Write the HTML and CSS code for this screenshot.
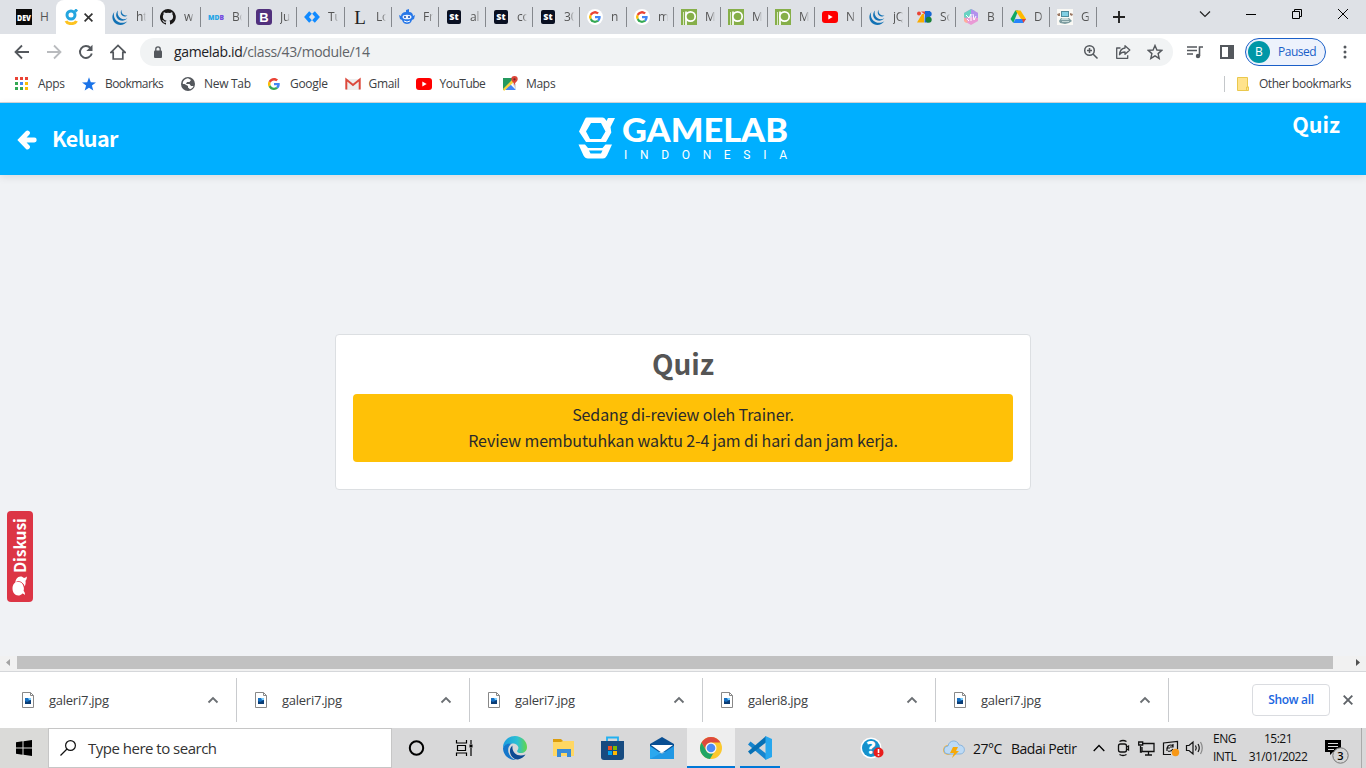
FILE: index.html
```html
<!DOCTYPE html>
<html lang="id">
<head>
<meta charset="utf-8">
<title>Gamelab Quiz</title>
<link rel="stylesheet" href="styles.css">
</head>
<body>
<svg class="defs" aria-hidden="true">
  <symbol id="google" viewBox="0 0 48 48"><path fill="#ea4335" d="M24 9.500c3.500 0 6.700 1.200 9.200 3.600l6.900-6.900C35.900 2.400 30.500 0 24 0 14.600 0 6.500 5.400 2.600 13.200l8 6.200C12.400 13.700 17.700 9.500 24 9.500z"/><path fill="#4285f4" d="M47 24.500c0-1.600-.2-3.100-.4-4.500H24v9h12.900c-.6 3-2.300 5.500-4.800 7.200l7.700 6C44.400 38 47 31.800 47 24.500z"/><path fill="#fbbc05" d="M10.500 28.600a14.500 14.500 0 0 1 0-9.200l-8-6.200a24 24 0 0 0 0 21.600z"/><path fill="#34a853" d="M24 48c6.500 0 11.900-2.100 15.900-5.800l-7.700-6c-2.200 1.500-4.900 2.300-8.200 2.300-6.300 0-11.600-4.200-13.500-9.900l-8 6.200C6.500 42.600 14.600 48 24 48z"/></symbol>
  <symbol id="youtube" viewBox="0 0 16 16"><rect y="2" width="16" height="12" rx="3" fill="#f00"/><path fill="#fff" d="M6.300 5.500v5L10.700 8z"/></symbol>
  <symbol id="jquery" viewBox="0 0 16 16"><g fill="#1272b5"><path d="M2.300 3C-1 7 0 13 5 15.200c3.700 1.600 8 .4 10.300-3-2.700 1.800-6 2.200-8.800.8C2.600 11 1 7 2.300 3z"/><path d="M6 1.500C3 4.700 3.800 9 7.300 11c2.700 1.500 6 .8 8-1.700-2.200 1.100-4.700 1.200-6.600 0C6 7.500 5 4.500 6 1.500z"/><path d="M9.700.800c-1.600 2-1.200 4.600.8 6 1.600 1.100 3.700.8 5-.6-1.400.4-2.800.4-3.900-.4C9.800 4.600 9.200 2.700 9.700.800z"/></g></symbol>
  <symbol id="st" viewBox="0 0 16 16"><rect x="1" y="1" width="14" height="14" rx="2" fill="#0a1022"/><text x="8" y="11.300" text-anchor="middle" font-family="Open Sans, sans-serif" font-size="9" font-weight="800" fill="#fff">St</text></symbol>
  <symbol id="pgreen" viewBox="0 0 16 16"><path fill="#86af49" d="M0 0h16v16H0z"/><path fill="none" stroke="#fff" stroke-width="1.700" d="M5 16V2.500"/><circle cx="9.500" cy="7.500" r="4.700" fill="#86af49" stroke="#fff" stroke-width="1.700"/><path stroke="#d8e8c2" d="M2.500 3v13"/></symbol>
  <symbol id="glogo" viewBox="0 0 38 42"><path fill="currentColor" fill-rule="evenodd" d="M8.500.500h16q2 0 3 2l1 1.500 1.500-3H37l-4.500 9 .8 5.500L28 25H8L1 14.500 7 2q.5-1.500 1.500-1.500zM13 6L8 14.500l4 7.500h11l4.500-7.500L23 6zM.5 27.500H7l3 3.500h14.500l3-3.500H34l-5 11q-1.500 3-4 3H10q-3 0-4.500-3zM11 33.500l1.500 3H23l1.500-3z"/></symbol>
  <symbol id="chrome" viewBox="0 0 24 24"><circle cx="12" cy="12" r="11" fill="#fbc82d"/><path fill="#de493d" d="M2.500 6.500a11 11 0 0 1 19 0H12a5.500 5.500 0 0 0-5 8z"/><path fill="#20a565" d="M2.500 6.500L7.200 14.700A5.500 5.500 0 0 0 14.500 17L11 23A11 11 0 0 1 2.500 6.500z"/><circle cx="12" cy="12" r="5.500" fill="#f4f6fa"/><circle cx="12" cy="12" r="4.300" fill="#4c8bf5"/></symbol>
  <symbol id="imgfile" viewBox="0 0 14 18"><path fill="#fff" stroke="#888" d="M1.500 1.500h8l3 3v12h-11z"/><path fill="none" stroke="#888" d="M9.500 1.500v3h3"/><path fill="#176fc1" d="M4 7h6v6H4z"/><path fill="#0b3d75" d="M4 10l2 1 4-2v4H4z"/><path fill="#7ed0ff" d="M7 7h3v2H8z"/></symbol>
  <symbol id="up" viewBox="0 0 12 8"><path d="M1.500 6.500L6 2l4.500 4.500" fill="none" stroke="currentColor" stroke-width="1.800"/></symbol>
</svg>

<div class="tabs">
  <div class="tab first"><svg viewBox="0 0 16 16"><path fill="#0a0a0a" d="M0 0h16v16H0z"/><text x="8" y="11.500" textLength="14" lengthAdjust="spacingAndGlyphs" text-anchor="middle" font-family="Open Sans, sans-serif" font-size="9.500" font-weight="800" fill="#fff">DEV</text></svg><span>H</span></div>
  <div class="tab active"><svg viewBox="0 0 16 16"><g fill="none"><circle cx="7" cy="6" r="4" stroke="#24a5df" stroke-width="3"/><path d="M11 2.500l2-2" stroke="#24a5df" stroke-width="3"/><path d="M2 12c1.500 3.500 9 3.500 10.500 0" stroke="#fdc321" stroke-width="3"/></g></svg><svg class="close" viewBox="0 0 8 8"><path d="M.5.500l7 7m0-7l-7 7" stroke="#333" stroke-width="1.500"/></svg></div>
  <div class="tab w"><svg><use href="#jquery"/></svg><span>ht</span></div>
  <div class="tab w"><svg viewBox="0 0 16 16"><path fill="#191717" d="M8 0a8 8 0 0 0-2.500 15.600c.4.100.5-.2.500-.4v-1.500c-2.200.5-2.700-1-2.700-1-.4-.9-.9-1.200-.9-1.200-.7-.5.100-.5.100-.5.800.1 1.200.8 1.200.8.700 1.200 1.900.9 2.300.7.100-.5.300-.9.500-1.100-1.800-.2-3.600-.9-3.600-4 0-.9.300-1.600.8-2.100-.1-.2-.4-1 .1-2.100 0 0 .7-.2 2.200.8a7.500 7.500 0 0 1 4 0c1.500-1 2.200-.8 2.200-.8.400 1.100.2 1.900.1 2.100.5.600.8 1.300.8 2.100 0 3.100-1.900 3.800-3.700 4 .3.300.6.800.6 1.500v2.200c0 .2.100.5.600.4A8 8 0 0 0 8 0z"/></svg><span>w</span></div>
  <div class="tab w"><svg viewBox="0 0 16 16"><text x="0" y="11" textLength="16" lengthAdjust="spacingAndGlyphs" font-family="Open Sans, sans-serif" font-size="7.500" font-weight="800" fill="#25a5e5">MD<tspan fill="#744be0">B</tspan></text></svg><span>Bo</span></div>
  <div class="tab w"><svg viewBox="0 0 16 16"><rect width="16" height="16" rx="3" fill="#51307d"/><text x="8" y="12.500" text-anchor="middle" font-family="Liberation Sans, sans-serif" font-size="13" font-weight="700" fill="#fff">B</text></svg><span>Ju</span></div>
  <div class="tab w"><svg viewBox="0 0 16 16"><path d="M6.500 3.500L2.500 8l4 4.500m3-9l4 4.500-4 4.500" fill="none" stroke="#118aff" stroke-width="3.600"/></svg><span>Tu</span></div>
  <div class="tab"><svg viewBox="0 0 16 16"><text x="8" y="14.500" text-anchor="middle" font-family="Liberation Serif, serif" font-size="19" fill="#222">L</text></svg><span>Lo</span></div>
  <div class="tab"><svg viewBox="0 0 16 16"><path fill="#2878e8" d="M7 1l3-1v3c3 0 4 2 4 4l2-1-1 4-2 1c-1 3-3 4-5 4s-4-1-5-4L1 10 0 6l2 1c0-2 2-4 5-4z"/><ellipse cx="8" cy="8" rx="4.500" ry="2.300" fill="#edf4ff"/><circle cx="6" cy="8" r="1" fill="#154bad"/><circle cx="10" cy="8" r="1" fill="#154bad"/><path d="M5 12q3 2 6 0" fill="none" stroke="#fff"/></svg><span>Fr</span></div>
  <div class="tab"><svg><use href="#st"/></svg><span>al</span></div>
  <div class="tab"><svg><use href="#st"/></svg><span>co</span></div>
  <div class="tab"><svg><use href="#st"/></svg><span>30</span></div>
  <div class="tab"><svg class="round"><use href="#google"/></svg><span>n</span></div>
  <div class="tab"><svg class="round"><use href="#google"/></svg><span>m</span></div>
  <div class="tab"><svg><use href="#pgreen"/></svg><span>M</span></div>
  <div class="tab"><svg><use href="#pgreen"/></svg><span>M</span></div>
  <div class="tab"><svg><use href="#pgreen"/></svg><span>M</span></div>
  <div class="tab"><svg><use href="#youtube"/></svg><span>N</span></div>
  <div class="tab"><svg><use href="#jquery"/></svg><span>jQ</span></div>
  <div class="tab"><svg viewBox="0 0 16 16"><circle cx="3" cy="4.500" r="2" fill="#ea4335"/><path fill="#f9ab00" d="M6 5h2v8.500H1z"/><path fill="#ea4335" d="M5 2.500h4v3z"/><path fill="#1967d2" d="M9 2h5v5l-2 6.500H8.500z"/><circle cx="13" cy="5" r="2.700" fill="#1967d2"/><circle cx="12.700" cy="10.700" r="3" fill="#188038"/></svg><span>So</span></div>
  <div class="tab"><svg viewBox="0 0 16 16"><path fill="#e99ad5" d="M8 0l7 4v8l-7 4-7-4V4z"/><path fill="#69d3c2" d="M8 0l4 2-4 6-7 1V4z"/><path fill="#b291ed" d="M8 0l7 4v5L8 8z"/><path fill="#ffad99" d="M1 8l4 5-2 1-2-2z"/><path d="M3 6l3 3 2-4v7m-4-2l2 2m4-7l1 6 2-4" stroke="#fff" fill="none"/></svg><span>B</span></div>
  <div class="tab"><svg viewBox="0 0 16 16"><path fill="#11a861" d="M5.300 1.500h3L3.300 14 .5 10z"/><path fill="#ffba00" d="M5.500 1.500h5L16 10h-5z"/><path fill="#2684fc" d="M3.300 14L5.500 10H16l-2.700 4z"/><path fill="#ea4335" d="M12 10h4l-2.700 4z"/></svg><span>D</span></div>
  <div class="tab"><svg viewBox="0 0 16 16"><path fill="#faf9f5" d="M0 0h16v16H0z"/><path fill="#4f8c9c" d="M4 2h8v6H4z"/><path fill="#81d0e4" d="M5 3h6v4H5z"/><path fill="#9b7864" d="M0 5l3-1v3H1zm13-1l3 1-1 2-2-1z"/><path fill="#7d9ca0" d="M4 9h8l3 3-3 2-4 1-5-1-1-2z"/><path fill="#c5d8d7" d="M5 9h6l1 2H4zm0 3h7v1H5z"/></svg><span>G</span></div>
  <svg class="plus" viewBox="0 0 12 12"><path d="M6 0v12M0 6h12" stroke="#222" stroke-width="1.900"/></svg>
  <div class="winbtns">
    <svg viewBox="0 0 12 12"><path d="M1 3.500l5 5 5-5" fill="none" stroke="#222" stroke-width="1.200"/></svg>
    <svg viewBox="0 0 12 12"><path d="M1 6.500h10" stroke="#000"/></svg>
    <svg viewBox="0 0 12 12"><path d="M1.500 3.500h7v7h-7zM3.500 3V1.500h7v7H9" fill="none" stroke="#000"/></svg>
    <svg viewBox="0 0 12 12"><path d="M1 1l10 10m0-10L1 11" stroke="#000"/></svg>
  </div>
</div>

<div class="toolbar">
  <div class="nav">
    <svg viewBox="0 0 16 16"><path d="M15 8H2m6-6.500L1.500 8 8 14.500" fill="none" stroke="#54585d" stroke-width="1.800"/></svg>
    <svg viewBox="0 0 16 16"><path d="M1 8h13M8 1.500L14.500 8 8 14.500" fill="none" stroke="#b9bbbe" stroke-width="1.800"/></svg>
    <svg viewBox="0 0 16 16"><path d="M13.800 9.500A6 6 0 1 1 12.500 4" fill="none" stroke="#54585d" stroke-width="1.900"/><path fill="#54585d" d="M14.500.800v6.200H8.300z"/></svg>
    <svg viewBox="0 0 16 16"><path d="M1 8.300L8 1.500l7 6.800h-2.200V15H3.200V8.300z" fill="none" stroke="#54585d" stroke-width="1.700"/></svg>
  </div>
  <div class="omni">
    <svg class="lock" viewBox="0 0 10 12"><rect x="1" y="4.500" width="8" height="7.500" rx="1" fill="#54585d"/><path d="M2.800 5V3a2.200 2.200 0 0 1 4.400 0v2" fill="none" stroke="#54585d" stroke-width="1.300"/></svg>
    <span class="url"><b>gamelab.id</b>/class/43/module/14</span>
    <svg viewBox="0 0 16 16"><g fill="none" stroke="#54585d" stroke-width="1.500"><circle cx="6.500" cy="6.500" r="4.800"/><path d="M10 10l4.500 4.500M4 6.500h5M6.500 4v5"/></g></svg>
    <svg viewBox="0 0 16 16"><g fill="none" stroke="#54585d" stroke-width="1.300" stroke-linejoin="round"><path d="M5.500 4H1.700v10.300h11v-3"/><path d="M10 1.700L14.800 6 10 10.300V8c-2.500 0-4.300.7-5.500 2.800C4.800 7 6.500 4.300 10 4z"/></g></svg>
    <svg viewBox="0 0 16 16"><path d="M8 1.500l1.900 4.500 4.900.4-3.700 3.200 1.100 4.800L8 11.800l-4.200 2.600 1.100-4.800-3.700-3.200 4.900-.4z" fill="none" stroke="#54585d" stroke-width="1.400"/></svg>
  </div>
  <svg class="media" viewBox="0 0 16 16"><path d="M0 3h10M0 6.500h10M0 10h6M12.500 12V3H16" fill="none" stroke="#54585d" stroke-width="1.600"/><circle cx="11" cy="12" r="2.200" fill="#54585d"/></svg>
  <svg class="panel" viewBox="0 0 14 14"><path fill="#54585d" fill-rule="evenodd" d="M0 0h14v14H0zM2 2v10h6V2z"/></svg>
  <div class="profile"><i>B</i><span>Paused</span></div>
  <svg class="dots" viewBox="0 0 4 14"><g fill="#54585d"><circle cx="2" cy="2" r="1.500"/><circle cx="2" cy="7" r="1.500"/><circle cx="2" cy="12" r="1.500"/></g></svg>
</div>

<div class="bookmarks">
  <div class="bm apps"><svg viewBox="0 0 16 16"><path fill="#ea4335" d="M1 1h3v3H1zm5 0h3v3H6zm5 0h3v3h-3z"/><path fill="#34a853" d="M1 6h3v3H1zm0 5h3v3H1zm5 0h3v3H6z"/><path fill="#4285f4" d="M6 6h3v3H6z"/><path fill="#fbbc05" d="M11 6h3v3h-3zm0 5h3v3h-3z"/></svg><span>Apps</span></div>
  <div class="bm books"><svg viewBox="0 0 16 16"><path fill="#1a73e8" d="M8 1.300l1.800 4.900 5.200.2-4.100 3.200 1.400 5L8 11.700l-4.300 2.900 1.400-5L1 6.400l5.200-.2z"/></svg><span>Bookmarks</span></div>
  <div class="bm newtab"><svg viewBox="0 0 16 16"><circle cx="8" cy="8" r="7" fill="#54585d"/><path fill="#fff" d="M8 2.300L11 4 9.500 6H7L6 8h3.500l1.500 2h2.500c-.6 1.700-1.800 2.800-3.500 3.300L8 11.500V10L4.500 8H2.800C2.600 5 4.800 2.700 8 2.300z"/></svg><span>New Tab</span></div>
  <div class="bm goo"><svg class="small"><use href="#google"/></svg><span>Google</span></div>
  <div class="bm mail"><svg viewBox="0 0 16 16"><path fill="#eee" d="M1 3h14v11H1z"/><path d="M1.300 13.500V3.500L8 9l6.700-5.500v10" fill="none" stroke="#dc493c" stroke-width="2"/></svg><span>Gmail</span></div>
  <div class="bm you"><svg><use href="#youtube"/></svg><span>YouTube</span></div>
  <div class="bm maps"><svg viewBox="0 0 16 16"><path fill="#24995e" d="M1 2h11L2 14H1z"/><path fill="#4285f4" d="M3 14l5-6 6 6z"/><path fill="#fbd33c" d="M10 4l2 2-10 9-1-2z"/><path fill="#d7dadd" d="M10 7l4 1v6z"/><path fill="#db4437" d="M12.500 0a3.200 3.200 0 0 0-3.200 3.300c0 2.500 3.200 2.700 3.200 7.200 0-4.500 3.200-4.700 3.200-7.200A3.200 3.200 0 0 0 12.500 0z"/><circle cx="12.500" cy="3.300" r="1.100" fill="#752821"/></svg><span>Maps</span></div>
  <div class="other"><svg viewBox="0 0 12 14"><path fill="#ffe38c" stroke="#eac84d" d="M.5.500h10V10h1v3.500H.5z"/><path d="M9.500 13v-3h2" fill="none" stroke="#eac84d"/></svg><span>Other bookmarks</span></div>
</div>

<header class="head">
  <div class="exit"><svg viewBox="0 0 20 20"><path d="M17.300 10H5m5.500-7L3.700 10l6.800 7" fill="none" stroke="#fff" stroke-width="4.800" stroke-linecap="round"/></svg><span>Keluar</span></div>
  <div class="brand"><svg class="mark"><use href="#glogo"/></svg><div class="words"><svg viewBox="0 0 166 46"><text class="gl" x="0" y="24.500" textLength="166" lengthAdjust="spacingAndGlyphs">GAMELAB</text><text class="ind" x="2" y="42.400" textLength="163">INDONESIA</text></svg></div></div>
  <div class="where">Quiz</div>
</header>

<main class="page">
  <section class="card">
    <h1>Quiz</h1>
    <p class="notice"><span>Sedang di-review oleh Trainer.</span><span>Review membutuhkan waktu 2-4 jam di hari dan jam kerja.</span></p>
  </section>
  <div class="chat"><svg viewBox="0 0 20 16"><path fill="#fff" d="M13 3.500c3.500-.3 6.500 2 6.500 5 0 1.500-.6 2.600-1.600 3.500.2 1 .8 2 1.700 2.800-1.800.2-3.300-.4-4.300-1.300-2 .4-4.300.1-5.800-1 4-1 5.500-5 3.500-9z"/><path fill="#fff" d="M7.500.500c4 0 7 2.500 7 5.700s-3 5.700-7 5.700c-.8 0-1.500-.1-2.200-.3-1.100.9-2.500 1.500-4.200 1.400.8-.8 1.300-1.700 1.500-2.700C1.300 9.200.5 7.800.5 6.200.5 3 3.500.5 7.500.5z"/><path d="M14.300 4.500c1 3.500-1 6.700-4.800 7.600" fill="none" stroke="#dc3545" stroke-width=".8"/></svg><span>Diskusi</span></div>
</main>
<div class="scroll"><svg viewBox="0 0 17 15"><path fill="#a3a3a3" d="M10 3v7L6 6.500z"/></svg><div class="thumb"></div><svg class="r" viewBox="0 0 17 15"><path fill="#505050" d="M7 3v7l4-3.500z"/></svg></div>

<div class="downloads">
  <div class="dl"><svg class="f"><use href="#imgfile"/></svg><span>galeri7.jpg</span><svg class="u"><use href="#up"/></svg></div>
  <div class="dl"><svg class="f"><use href="#imgfile"/></svg><span>galeri7.jpg</span><svg class="u"><use href="#up"/></svg></div>
  <div class="dl"><svg class="f"><use href="#imgfile"/></svg><span>galeri7.jpg</span><svg class="u"><use href="#up"/></svg></div>
  <div class="dl"><svg class="f"><use href="#imgfile"/></svg><span>galeri8.jpg</span><svg class="u"><use href="#up"/></svg></div>
  <div class="dl"><svg class="f"><use href="#imgfile"/></svg><span>galeri7.jpg</span><svg class="u"><use href="#up"/></svg></div>
  <div class="showall">Show all</div>
  <svg class="x" viewBox="0 0 10 10"><path d="M.7.700l8.600 8.600m0-8.600L.7 9.300" stroke="#5f6368" stroke-width="1.900"/></svg>
</div>

<footer class="taskbar">
  <div class="start"><svg viewBox="0 0 16 16"><path d="M0 2.200L6.500 1.300v6.200H0zM7.500 1.200L16 0v7.500H7.500zM0 8.500h6.500v6.200L0 13.800zM7.500 8.500H16V16l-8.500-1.200z"/></svg></div>
  <div class="search"><svg viewBox="0 0 16 16"><circle cx="10.500" cy="5.500" r="4.900" fill="none" stroke="#111" stroke-width="1.200"/><path d="M7 9L.5 15.500" stroke="#111" stroke-width="1.300"/></svg><span>Type here to search</span></div>
  <div class="app"><svg viewBox="0 0 24 24"><circle cx="11.500" cy="12" r="6.700" fill="none" stroke="#000" stroke-width="2"/></svg></div>
  <div class="app"><svg viewBox="0 0 24 24"><path d="M2.500 4v3h10V4M2.500 20v-3h10v3M3.500 9.500h8v5h-8zM17 4v4M17 12v8" fill="none" stroke="#000" stroke-width="1.200"/><path d="M15.500 8.500h3v3h-3z"/></svg></div>
  <div class="app"><svg viewBox="0 0 24 24"><defs><linearGradient id="e" x2="1"><stop stop-color="#199ce0"/><stop offset=".6" stop-color="#2dc0d2"/><stop offset="1" stop-color="#63d747"/></linearGradient></defs><path fill="url(#e)" d="M0 12C0 5 5.500 0 12 0s12 5 12 11c0 4-3 6-6 6-3.500 0-4.500-1.500-3.500-2.800C17 11 14 7.500 9.500 7.500 5 7.500 1 9 0 12z"/><path fill="#1577cb" d="M0 12c1-3.500 5-5 9-4.500-3 1.500-4.500 5-3.500 9C6.500 20 9.500 23 13 24 6 24.500 0 19 0 12z"/><path fill="#0c4a93" d="M9.500 9.500C4 14 8 24 15 23.500c3-.5 6-2.500 7.500-5-7 3-14-1-13-9z"/></svg></div>
  <div class="app"><svg viewBox="0 0 24 24"><path fill="#dc9d0c" d="M1 3h8l2 2v4H1z"/><path fill="#ffd763" d="M1 6h8l2-1h11v15H1z"/><path fill="#398bd7" d="M5 13h14v8h-4v-4H9v4H5z"/></svg></div>
  <div class="app"><svg viewBox="0 0 24 24"><path d="M6 6V1.500h11V6" fill="none" stroke="#23b1f1" stroke-width="1.800"/><path fill="#174b80" d="M0 5h23v16q0 3-3 3H3q-3 0-3-3z"/><path fill="#f25022" d="M7 10h4v4H7z"/><path fill="#7fba00" d="M12 10h4v4h-4z"/><path fill="#00a4ef" d="M7 15h4v4H7z"/><path fill="#ffb900" d="M12 15h4v4h-4z"/></svg></div>
  <div class="app"><svg viewBox="0 0 24 24"><path fill="#094f93" d="M0 8l12-7 12 7v8H0z"/><path fill="#fff" d="M1 9h22l-11 8z"/><path fill="#2ba8ef" d="M0 10l12 8L24 10v13H0z"/><path fill="#1785d6" d="M24 10L0 23h24z" opacity=".45"/></svg></div>
  <div class="app on"><svg><use href="#chrome"/></svg></div>
  <div class="app run"><svg viewBox="0 0 24 24"><path fill="#1685ce" d="M2.500 5.500L18 17.500V24L0 8.500z"/><path fill="#0870b4" d="M0 15.500L18 0v6.500L2.500 18.500z"/><path fill="#27a7ee" d="M17.500 0L24 3v18l-6.500 3z"/></svg></div>
  <div class="help"><svg viewBox="0 0 24 24"><circle cx="11" cy="11" r="10.500" fill="#fff"/><circle cx="11" cy="11" r="9" fill="#1492cd"/><text x="11" y="17" text-anchor="middle" font-family="Open Sans, sans-serif" font-size="17" font-weight="800" fill="#fff">?</text><circle cx="18.500" cy="15.500" r="5" fill="#e81c1c"/><path d="M18.500 12v4m0 1.200v1.500" stroke="#fff" stroke-width="1.600"/></svg></div>
  <div class="weather"><svg viewBox="0 0 24 20"><circle cx="6" cy="11" r="5" fill="#f8b840"/><path fill="#bddaf5" stroke="#75a9db" stroke-width=".8" d="M6 15a4 4 0 0 1 0-8c1-6 9-7 11-1 7 0 7 9 1 9z"/><path fill="#f6a90a" d="M11 8h5l-2 4h3l-7 7 2-5H8z"/></svg><span class="deg">27°C</span><span class="cond">Badai Petir</span></div>
  <div class="tray">
    <svg class="tup" viewBox="0 0 12 8"><path d="M.7 7L6 1.500 11.300 7" fill="none" stroke="#000" stroke-width="1.300"/></svg>
    <svg viewBox="0 0 18 18"><g fill="none" stroke="#111" stroke-width="1.300"><rect x="3.500" y="5" width="8" height="8" rx="2"/><path d="M11.500 8l2-1v4l-2-1M4.500 2.500q3.500-2 7 0M4.500 15.500q3.500 2 7 0"/></g></svg>
    <svg viewBox="0 0 18 18"><g fill="none" stroke="#111" stroke-width="1.300"><path d="M4 4.500h12v8H4V8M7 16h7M10.500 12.500V16M2.500 7v6H4M.7 3h4v3h-4z"/></g></svg>
    <svg viewBox="0 0 18 18"><path d="M9 15.500H1.500V4l14-1.500v8M5 10l1-3q3-2 5 0m0-2v3H8m-3 4V9h3m-2 3q3 1 5-2" fill="none" stroke="#111" stroke-width="1.200"/><circle cx="13.500" cy="13.500" r="3.700" fill="#f79817"/></svg>
    <svg viewBox="0 0 18 18"><g fill="none" stroke="#111" stroke-width="1.200"><path d="M1.500 6.500H4L8 3v12l-4-3.500H1.500zM10.500 6.500q1.500 2.500 0 5M13 5q2.500 4 0 8"/><path stroke="#888" d="M15.500 3q3.500 6 0 12"/></g></svg>
  </div>
  <div class="two lang"><span>ENG</span><span>INTL</span></div>
  <div class="two clock"><span>15:21</span><span>31/01/2022</span></div>
  <div class="notif"><svg viewBox="0 0 26 26"><path d="M1 1h16v12H9l-3 3v-3H1z"/><path d="M4 4.500h10M4 7.500h10M4 10.500h6" stroke="#ddd" stroke-width="1.100"/><circle cx="16.500" cy="16.500" r="7.700" fill="#d5d5d5" stroke="#777"/><text x="16.500" y="20.500" text-anchor="middle" font-family="Open Sans, sans-serif" font-size="11" font-weight="600">3</text></svg></div>
</footer>
</body>
</html>
```
FILE: styles.css
```css
* { box-sizing: border-box; }
body { margin: 0; width: 1366px; height: 768px; overflow: hidden; display: flex; flex-direction: column; font: 12px/16px "Open Sans", "Noto Sans", sans-serif; color: #3c4043; background: #fff; }
svg { display: block; flex: none; }
span { white-space: nowrap; }
.defs { position: absolute; width: 0; height: 0; }

.tabs { height: 34px; flex: none; display: flex; background: #dee1e6; }
.tab { width: 47px; height: 34px; padding-left: 7px; display: flex; align-items: center; flex: none; background: linear-gradient(#85888d, #85888d) right 7px / 1px 20px no-repeat; }
.tab svg { width: 16px; height: 16px; }
.tab span { margin-left: 8px; letter-spacing: -.2px; color: #555; -webkit-mask-image: linear-gradient(90deg, #000 6px, transparent 10px); mask-image: linear-gradient(90deg, #000 6px, transparent 10px); }
.tab.w { width: 48px; }
.tab.first { width: 56px; padding-left: 16px; background: none; }
.tab.first span { -webkit-mask-image: none; mask-image: none; }
.tab.active { width: 49px; padding-left: 8px; background: #fff; border-radius: 8px 8px 0 0; }
.tab .close { width: 9px; height: 9px; margin-left: 4px; }
.tab .round { background: #fff; border-radius: 50%; padding: 2px; }
.plus { width: 12px; height: 12px; margin: 11px 0 0 16px; }
.winbtns { display: flex; margin: 8px 0 0 74px; gap: 34px; }
.winbtns svg { width: 12px; height: 12px; }

.toolbar { height: 36px; flex: none; display: flex; align-items: center; }
.nav { width: 140px; padding-left: 14px; display: flex; gap: 16px; }
.nav svg { width: 16px; height: 16px; }
.omni { width: 1033px; height: 28px; border-radius: 14px; background: #f1f3f4; display: flex; align-items: center; gap: 16px; padding: 0 10px 0 13px; }
.omni svg { width: 16px; height: 16px; }
.omni .lock { width: 10px; height: 12px; margin-right: -5px; }
.url { flex: 1; font-size: 14px; letter-spacing: -.35px; color: #5f6368; }
.url b { font-weight: 400; color: #202124; }
.media { width: 16px; height: 16px; margin-left: 14px; }
.panel { width: 14px; height: 14px; margin-left: 17px; }
.profile { width: 81px; height: 28px; margin-left: 11px; border: 1px solid #1a5fc8; border-radius: 14px; background: #edf2fc; display: flex; align-items: center; padding-left: 2px; color: #1a5fc8; }
.profile i { width: 22px; height: 22px; border-radius: 50%; background: #0097a7; color: #fff; font-style: normal; text-align: center; line-height: 22px; }
.profile span { margin-left: 8px; letter-spacing: -.5px; }
.dots { width: 4px; height: 14px; margin-left: 17px; }

.bookmarks { height: 33px; flex: none; padding: 0 15px 4px 14px; display: flex; align-items: center; border-bottom: 1px solid #d5d7da; }
.bm { display: flex; align-items: center; gap: 8px; letter-spacing: -.3px; }
.bm svg { width: 16px; height: 16px; }
.bm .small { padding: 2px; }
.apps { width: 67px; }
.books { width: 99px; letter-spacing: -.55px; }
.newtab { width: 86px; }
.goo { width: 78.500px; }
.mail { width: 71px; }
.you { width: 86.500px; letter-spacing: -.5px; }
.other { margin-left: auto; height: 16px; display: flex; align-items: center; border-left: 1px solid #c4c7ca; padding-left: 12px; gap: 10px; letter-spacing: -.43px; }
.other svg { width: 12px; height: 14px; }

.head { height: 72px; flex: none; background: #00afff; color: #fff; display: flex; justify-content: space-between; position: relative; z-index: 1; box-shadow: 0 2px 8px rgba(0, 0, 0, .1); font: 700 21.500px/30px "Noto Sans CJK SC", sans-serif; }
.exit { width: 560px; display: flex; align-items: center; padding: 0 0 2px 17px; gap: 15px; }
.exit svg { width: 20px; height: 20px; margin-top: 3px; }
.exit span { letter-spacing: -.6px; }
.brand { width: 210px; display: flex; padding-top: 14px; gap: 6px; }
.mark { width: 38px; height: 42px; }
.words svg { width: 166px; height: 46px; }
.gl { font: 900 32px "Lato", sans-serif; fill: #fff; }
.ind { font: 400 12px "Roboto", sans-serif; fill: #fff; }
.where { width: 560px; padding: 6px 26px 0 0; text-align: right; }

.page { flex: 1; background: #f0f2f5; position: relative; display: flex; justify-content: center; align-items: flex-start; padding-top: 159px; }
.card { width: 696px; height: 156px; background: #fff; border: 1px solid #dcdfe2; border-radius: 4px; padding: 9px 17px; font-family: "Noto Sans CJK SC", sans-serif; text-align: center; }
h1 { margin: 0; font-size: 28px; line-height: 38px; color: #555; }
.notice { margin: 12px 0 0; height: 68px; padding-top: 7px; border-radius: 4px; background: #ffc107; color: #292a2c; font-size: 16px; letter-spacing: -.12px; line-height: 26px; display: flex; flex-direction: column; align-items: center; }
.chat { position: absolute; left: 7px; top: 427px; width: 91px; height: 26px; background: #dc3545; border-radius: 4px; display: flex; align-items: center; gap: 3px; transform: rotate(-90deg); transform-origin: 0 0; padding-left: 6px; color: #fff; font: 700 15.500px/26px "Noto Sans CJK SC", sans-serif; }
.chat svg { width: 20px; height: 16px; }
.chat span { position: relative; top: -1px; }

.scroll { height: 15px; flex: none; background: #f1f1f1; display: flex; align-items: flex-start; }
.scroll svg { width: 17px; height: 15px; }
.scroll .r { margin-left: 16px; }
.thumb { width: 1316px; height: 13px; background: #c1c1c1; }

.downloads { height: 57px; flex: none; border-top: 1px solid #d5d7da; display: flex; align-items: center; background: #fff; }
.dl { height: 44px; width: 233px; padding-left: 17px; display: flex; align-items: center; border-right: 1px solid #c9cbce; font-size: 13px; }
.dl:first-child { width: 237px; padding-left: 21px; }
.dl .f { width: 14px; height: 18px; }
.dl span { margin-left: 14px; flex: 1; letter-spacing: -.25px; }
.dl .u { width: 12px; height: 8px; margin-right: 17px; color: #6b6f73; }
.showall { width: 78px; height: 32px; margin-left: 83px; border: 1px solid #dadce0; border-radius: 4px; color: #1a66e0; text-align: center; line-height: 29px; font-weight: 600; letter-spacing: -.35px; }
.x { width: 10px; height: 10px; margin-left: 13px; }

.taskbar { height: 40px; flex: none; display: flex; background: #d8d8d9; color: #111; }
.start { width: 48px; padding: 12px 0 0 16px; background: #dadad8; }
.start svg { width: 16px; height: 16px; }
.search { width: 344px; background: #fff; border: 1px solid #c6c6c6; display: flex; align-items: center; padding-left: 11px; gap: 12px; font-size: 15px; letter-spacing: -.5px; color: #333; }
.search svg { width: 16px; height: 16px; }
.app { width: 49px; display: flex; align-items: center; justify-content: center; border-bottom: 2px solid transparent; padding-top: 2px; }
.app svg { width: 24px; height: 24px; }
.on { background: #eee; border-color: #0078d7; margin-left: 1px; width: 48px; }
.run { background: linear-gradient(#0078d7, #0078d7) 5px 100% / 40px 2px no-repeat border-box; }
.help { margin-left: 76px; width: 24px; padding-top: 9px; }
.help svg { width: 24px; height: 24px; }
.weather { margin-left: 58px; width: 148px; display: flex; align-items: center; font-size: 14px; letter-spacing: -.5px; padding-top: 2px; }
.weather svg { width: 24px; height: 20px; margin-right: 7px; }
.deg { width: 38px; }
.tray { display: flex; align-items: center; gap: 5.500px; width: 120px; margin-left: 3px; }
.tray svg { width: 18px; height: 18px; }
.tray .tup { width: 12px; height: 8px; margin-right: 4px; }
.two { display: flex; flex-direction: column; align-items: center; padding-top: 2px; line-height: 18px; letter-spacing: -.5px; }
.lang { width: 32px; align-items: flex-start; }
.clock { width: 66px; }
.notif { width: 39px; margin-left: 12px; padding: 11px 0 0 1px; border-right: 1px solid #aaa; }
.notif svg { width: 26px; height: 26px; }
```
